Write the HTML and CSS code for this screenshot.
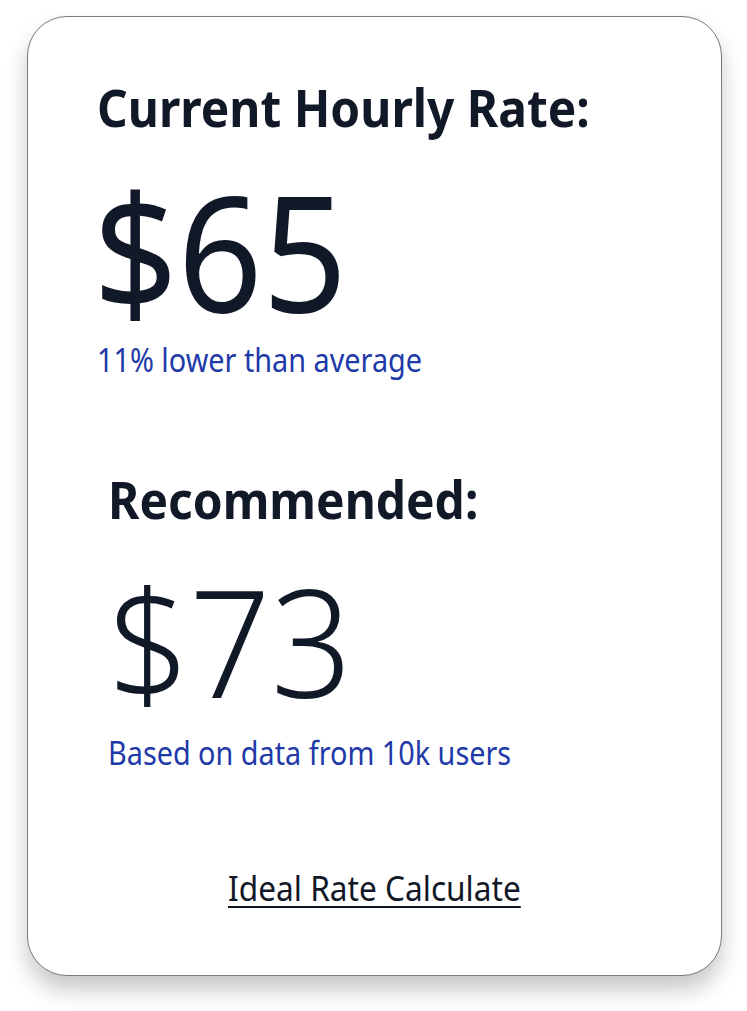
FILE: index.html
```html
<!DOCTYPE html>
<html>
<head>
<meta charset="utf-8">
<link rel="stylesheet" href="styles.css">
</head>
<body>
<div class="card">
  <section class="block first">
    <h2 class="title">Current Hourly Rate:</h2>
    <div class="amount">$65</div>
    <p class="note">11% lower than average</p>
  </section>
  <section class="block second">
    <h2 class="title">Recommended:</h2>
    <div class="amount alt">$73</div>
    <p class="note">Based on data from 10k users</p>
  </section>
  <div class="footer">
    <a class="link" href="#">Ideal Rate Calculate</a>
  </div>
</div>
</body>
</html>
```
FILE: styles.css
```css
html, body {
  margin: 0;
  padding: 0;
  background: #ffffff;
}
body {
  padding: 16px 25px 35px 27px;
  font-family: "Noto Sans", "Open Sans", sans-serif;
  color: #111827;
}
.card {
  box-sizing: border-box;
  width: 695px;
  height: 960px;
  border: 1px solid #7a7a7a;
  border-radius: 40px;
  box-shadow: 0 14px 22px rgba(0, 0, 0, 0.22);
  background: #fff;
  display: flex;
  flex-direction: column;
}
.block {
  display: flex;
  flex-direction: column;
  align-items: flex-start;
}
.first {
  padding: 60px 0 0 69px;
}
.second {
  padding: 89px 0 0 80px;
}
.title {
  margin: 0;
  font-size: 52px;
  font-weight: 700;
  line-height: 60px;
  transform: scaleX(0.921);
  transform-origin: left center;
}
.amount {
  font-size: 161px;
  font-weight: 400;
  line-height: 160px;
  margin: 33px 0 0 -4px;
  transform: scaleX(0.92);
  transform-origin: left center;
}
.amount.alt {
  font-size: 150px;
  font-weight: 350;
  line-height: 150px;
  margin: 36px 0 0 0;
  transform: scaleX(0.95);
}
.note {
  margin: 10px 0 0 0;
  font-size: 32px;
  line-height: 40px;
  color: #1e3aa8;
  transform: scaleX(0.9);
  transform-origin: left center;
}
.second .note {
  margin-top: 18px;
}
.footer {
  margin-top: auto;
  padding-bottom: 67px;
  display: flex;
  justify-content: center;
}
.link {
  display: inline-block;
  font-size: 34px;
  line-height: 40px;
  color: #111827;
  text-decoration: underline;
  text-decoration-thickness: 2px;
  text-underline-offset: 5px;
  transform: scaleX(0.93);
  transform-origin: center;
}
```
